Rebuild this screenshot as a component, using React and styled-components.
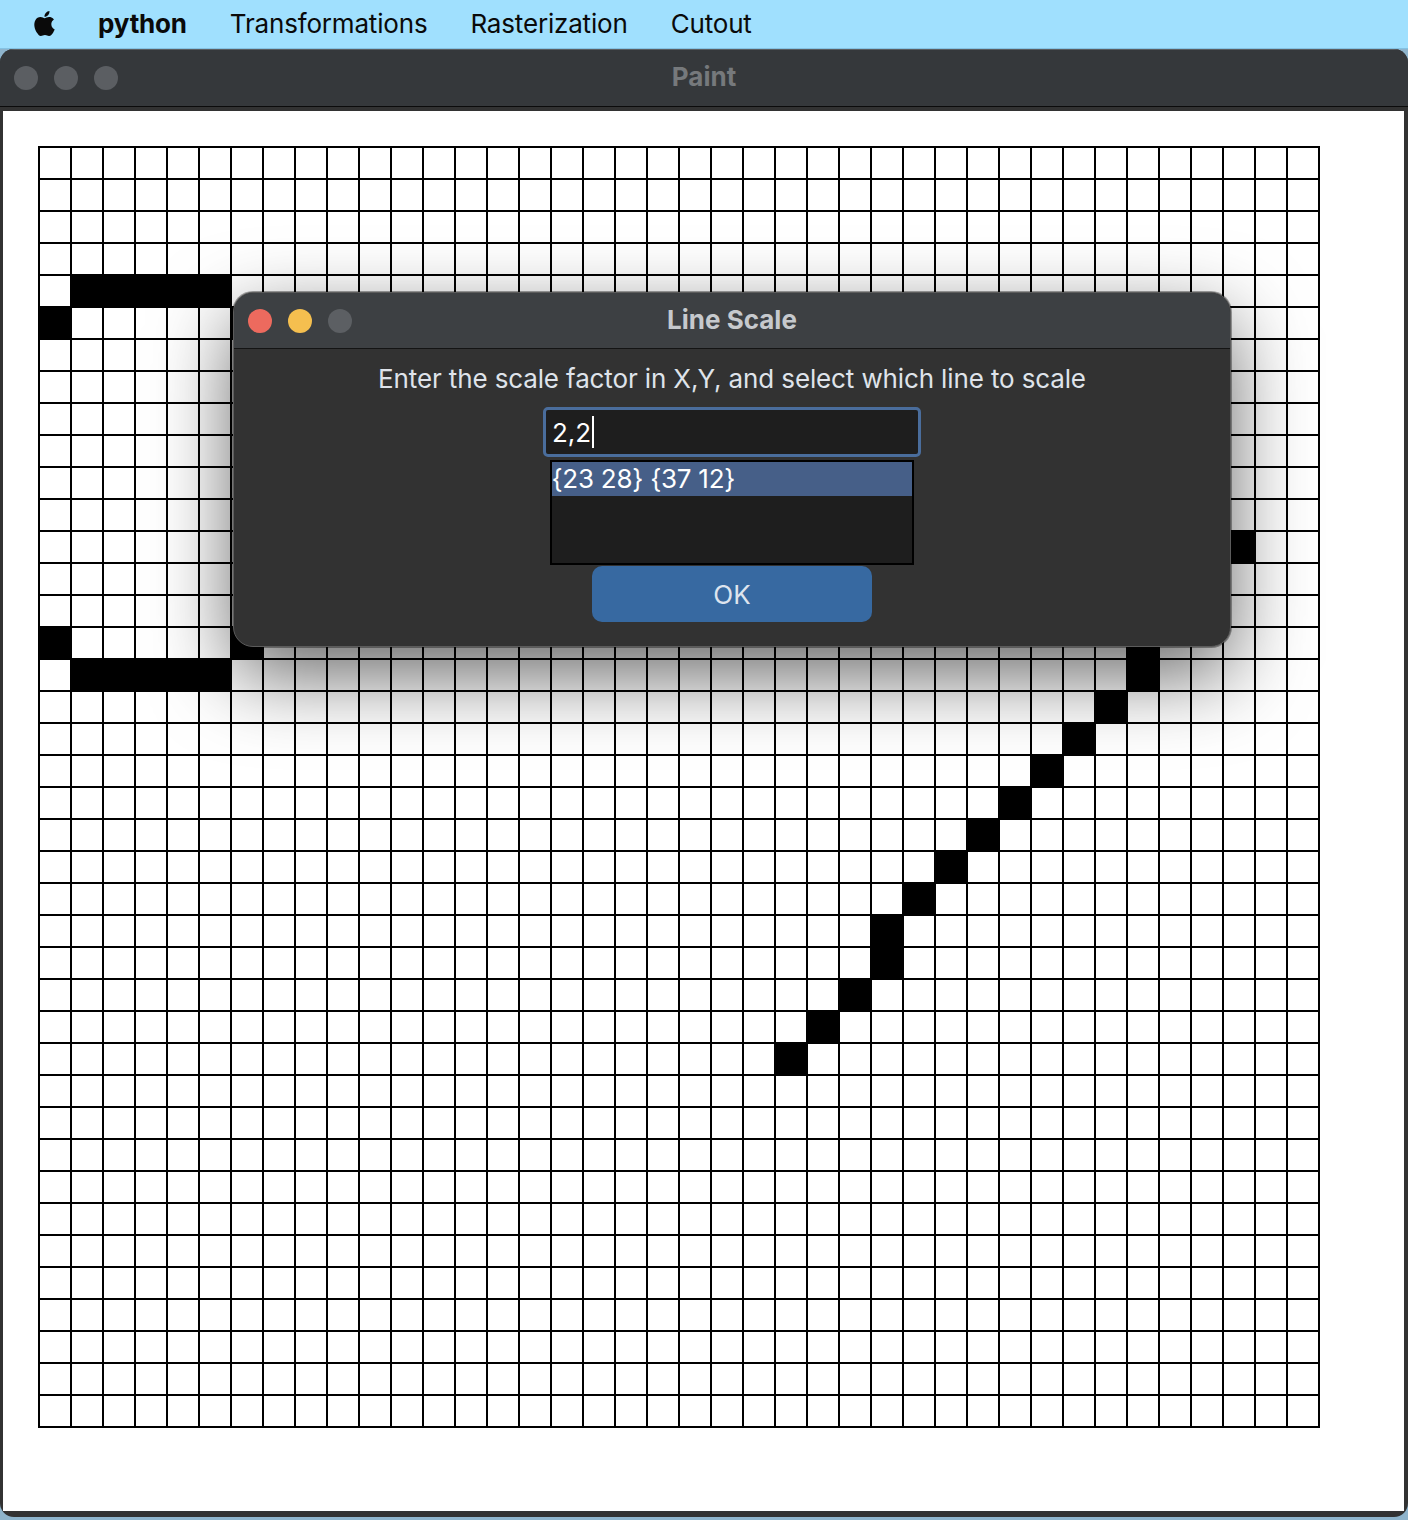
import React from 'react';
import styled, {createGlobalStyle} from 'styled-components';
import {SiApple} from 'react-icons/si';

const GlobalStyle = createGlobalStyle`
    html, body {
        margin: 0;
        padding: 0;
    }
    body {
        background: #8eb4cc;
        font-family: Inter, "Noto Sans", sans-serif;
    }
`;

const Screen = styled.div`
    position: relative;
    width: 1408px;
    height: 1520px;
    overflow: hidden;
    display: flex;
    flex-direction: column;
    background: #8eb4cc;
`;

const MenuBar = styled.div`
    height: 48px;
    background: #a0e0fe;
    border-bottom: 1px solid #84c2e3;
    display: flex;
    align-items: center;
    gap: 43px;
    padding-left: 32px;
    font-size: 26px;
    letter-spacing: -0.18px;
    color: #0a0a0a;
`;

const MenuItem = styled.span`
    font-weight: ${p => (p.$bold ? 700 : 400)};
    line-height: 48px;
`;

const AppleLogo = styled(SiApple)`
    width: 25px;
    height: 29px;
    margin-top: -2px;
    margin-right: -2px;
`;

const Window = styled.div`
    height: 1468px;
    display: flex;
    flex-direction: column;
    background: #323232;
    border-radius: 14px;
    overflow: hidden;
`;

const TitleBar = styled.div`
    height: 56px;
    flex-shrink: 0;
    background: #35383b;
    border-top: 1px solid #5b5e61;
    border-bottom: 1px solid #0b0b0b;
    display: grid;
    grid-template-columns: 1fr auto 1fr;
    align-items: center;
    padding: 0 14px;
`;

const Lights = styled.div`
    display: flex;
    gap: 16px;
`;

const Light = styled.span`
    width: 24px;
    height: 24px;
    border-radius: 50%;
    background: ${p => p.$color || '#5b5e62'};
`;

const WindowTitle = styled.span`
    font-size: 26px;
    font-weight: 700;
    line-height: 30px;
    margin-top: -2px;
    color: ${p => p.$color || '#76797c'};
`;

const Content = styled.div`
    flex: 1;
    margin: 4px 4px 6px 3px;
    background: #fff;
    padding: 35px 0 0 35px;
`;

const PixelGrid = styled.div`
    width: 1282px;
    height: 1282px;
    display: grid;
    grid-template-columns: repeat(40, 32px);
    grid-template-rows: repeat(40, 32px);
    background-image:
        linear-gradient(90deg, #000 2px, transparent 2px),
        linear-gradient(180deg, #000 2px, transparent 2px);
    background-size: 32px 32px;
`;

const Pixel = styled.div`
    grid-column: ${p => p.$col + 1};
    grid-row: ${p => p.$row + 1};
    width: 34px;
    height: 34px;
    background: #000;
`;

const Dialog = styled.div`
    position: absolute;
    left: 233px;
    top: 292px;
    width: 998px;
    height: 355px;
    box-sizing: border-box;
    border: 1px solid #5c5c5c;
    border-radius: 20px;
    background: #323232;
    overflow: hidden;
    box-shadow: 0 28px 80px rgba(0, 0, 0, 0.6), 0 0 0 1px rgba(0, 0, 0, 0.35);
    display: flex;
    flex-direction: column;
`;

const DialogBar = styled(TitleBar)`
    height: 55px;
    background: #3d4043;
    border-top: none;
    border-bottom: 1px solid #141414;
`;

const DialogBody = styled.div`
    flex: 1;
    display: flex;
    flex-direction: column;
    align-items: center;
    padding-top: 15px;
`;

const Prompt = styled.div`
    font-size: 26px;
    line-height: 30px;
    letter-spacing: -0.13px;
    color: #dfe3ea;
`;

const Entry = styled.div`
    box-sizing: border-box;
    width: 378px;
    height: 50px;
    margin-top: 13px;
    border: 3px solid #4a6d9c;
    border-radius: 5px;
    background: #1e1e1e;
    display: flex;
    align-items: center;
    padding-left: 6px;
    font-size: 26px;
    color: #fff;
`;

const Caret = styled.span`
    width: 2px;
    height: 32px;
    margin-left: 1px;
    background: #fff;
`;

const ListBox = styled.div`
    box-sizing: border-box;
    width: 364px;
    height: 105px;
    margin-top: 3px;
    margin-right: 1px;
    border: 2px solid #000;
    background: #1e1e1e;
`;

const ListRow = styled.div`
    height: 34px;
    line-height: 34px;
    font-size: 26px;
    letter-spacing: -0.25px;
    color: #fff;
    background: ${p => (p.$selected ? '#465f88' : 'transparent')};
`;

const Button = styled.button`
    width: 280px;
    height: 56px;
    margin-top: 1px;
    border: none;
    border-radius: 10px;
    background: #3769a1;
    color: #dde4ee;
    font-family: inherit;
    font-size: 26px;
`;

// bresenham result for the line {23 28} -> {37 12}
const lineCells = [
    [23, 28], [24, 27], [25, 26], [26, 25], [26, 24], [27, 23], [28, 22], [29, 21],
    [30, 20], [31, 19], [32, 18], [33, 17], [34, 16], [34, 15], [35, 14], [36, 13], [37, 12],
];

const shapeCells = [
    [1, 4], [2, 4], [3, 4], [4, 4], [5, 4],
    [0, 5], [6, 5],
    [0, 15], [6, 15],
    [1, 16], [2, 16], [3, 16], [4, 16], [5, 16],
];

const App = () => {
    const cells = [...shapeCells, ...lineCells];

    return (
        <Screen>
            <GlobalStyle />
            <MenuBar>
                <AppleLogo />
                <MenuItem $bold>python</MenuItem>
                <MenuItem>Transformations</MenuItem>
                <MenuItem>Rasterization</MenuItem>
                <MenuItem>Cutout</MenuItem>
            </MenuBar>
            <Window>
                <TitleBar>
                    <Lights>
                        <Light />
                        <Light />
                        <Light />
                    </Lights>
                    <WindowTitle>Paint</WindowTitle>
                    <span />
                </TitleBar>
                <Content>
                    <PixelGrid>
                        {cells.map(([col, row]) => (
                            <Pixel key={col + '-' + row} $col={col} $row={row} />
                        ))}
                    </PixelGrid>
                </Content>
            </Window>

            <Dialog>
                <DialogBar>
                    <Lights>
                        <Light $color="#ed6a5e" />
                        <Light $color="#f5bf4f" />
                        <Light $color="#5c5f63" />
                    </Lights>
                    <WindowTitle $color="#c6c9cd">Line Scale</WindowTitle>
                    <span />
                </DialogBar>
                <DialogBody>
                    <Prompt>Enter the scale factor in X,Y, and select which line to scale</Prompt>
                    <Entry>
                        2,2
                        <Caret />
                    </Entry>
                    <ListBox>
                        <ListRow $selected>{'{23 28} {37 12}'}</ListRow>
                    </ListBox>
                    <Button>OK</Button>
                </DialogBody>
            </Dialog>
        </Screen>
    );
};

export default App;
